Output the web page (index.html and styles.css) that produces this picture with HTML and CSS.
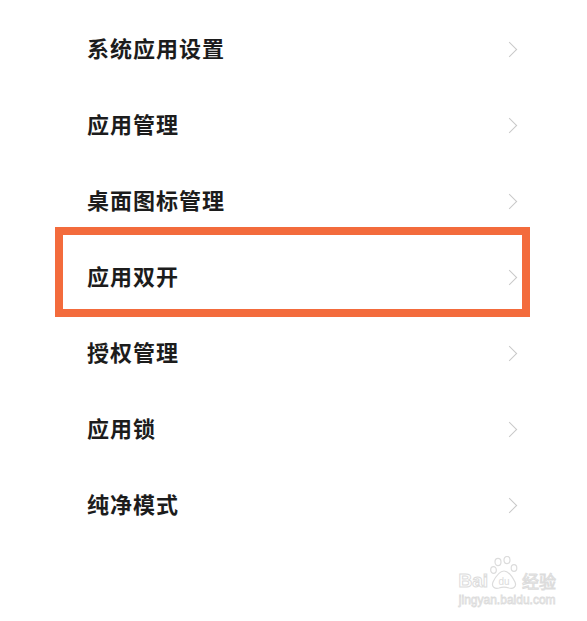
FILE: index.html
```html
<!DOCTYPE html>
<html lang="zh-CN">
<head>
    <meta charset="UTF-8">
    <meta name="viewport" content="width=device-width, initial-scale=1.0">
    <title>应用设置</title>
    <link rel="stylesheet" href="styles.css">
</head>
<body>
    <!-- Settings list -->
    <ul class="settings">
        <li class="row"><span class="label">系统应用设置</span><span class="chevron"></span></li>
        <li class="row"><span class="label">应用管理</span><span class="chevron"></span></li>
        <li class="row"><span class="label">桌面图标管理</span><span class="chevron"></span></li>
        <li class="row marked">
            <span class="label">应用双开</span><span class="chevron"></span>
            <!-- Annotation frame drawn over the row -->
            <div class="highlight"></div>
        </li>
        <li class="row"><span class="label">授权管理</span><span class="chevron"></span></li>
        <li class="row"><span class="label">应用锁</span><span class="chevron"></span></li>
        <li class="row"><span class="label">纯净模式</span><span class="chevron"></span></li>
    </ul>

    <!-- Watermark in the bottom-right corner -->
    <div class="watermark">
        <div class="wm-top">
            <span class="wm-bai">Bai</span>
            <svg class="wm-paw" width="30" height="34" viewBox="0 0 30 34">
                <ellipse cx="8" cy="6" rx="3" ry="3.6" fill="none" stroke="#dcdcdc" stroke-width="1.2"/>
                <ellipse cx="17" cy="4" rx="3" ry="3.6" fill="none" stroke="#dcdcdc" stroke-width="1.2"/>
                <ellipse cx="3.5" cy="14" rx="2.8" ry="3.4" fill="none" stroke="#dcdcdc" stroke-width="1.2"/>
                <ellipse cx="24" cy="12" rx="2.8" ry="3.4" fill="none" stroke="#dcdcdc" stroke-width="1.2"/>
                <path d="M14 15 C9 15 5 22 3 26 C1 31 5 33 9 32 C12 31 16 31 19 32 C23 33 27 31 25 26 C23 22 19 15 14 15 Z" fill="none" stroke="#dcdcdc" stroke-width="1.2"/>
                <text x="14" y="29" text-anchor="middle" font-family="Liberation Sans, sans-serif" font-size="10" fill="#dcdcdc">du</text>
            </svg>
            <span class="wm-cn">经验</span>
        </div>
        <div class="wm-url">jingyan.baidu.com</div>
    </div>
</body>
</html>
```

FILE: styles.css
```css
/* General styling */
body {
    margin: 0;
    background-color: #ffffff;
    font-family: "Noto Sans CJK SC", "Noto Sans", sans-serif;
    width: 587px;
    height: 621px;
    position: relative;
    overflow: hidden;
}

.settings {
    list-style: none;
    margin: 0;
    padding: 9px 0 0 0;
}

.row {
    position: relative;
    height: 76px;
    display: flex;
    align-items: center;
    justify-content: space-between;
    padding: 0 70px 0 87px;
}

.label {
    font-size: 22px;
    font-weight: bold;
    letter-spacing: 1px;
    color: #1c1c1c;
}

/* Small grey arrow on the right */
.chevron {
    width: 10px;
    height: 10px;
    border-top: 1.6px solid #c8c8c8;
    border-right: 1.6px solid #c8c8c8;
    transform: rotate(45deg);
    margin: 4px 2px 0 0;
}

.highlight {
    position: absolute;
    top: -10px;
    bottom: -4px;
    left: 55px;
    right: 57px;
    border: 8px solid #f36b3c;
    box-sizing: border-box;
}

/* Watermark */
.watermark {
    position: absolute;
    right: 31px;
    bottom: 14px;
    display: flex;
    flex-direction: column;
    align-items: center;
    color: #ffffff;
}

.wm-top {
    display: flex;
    align-items: flex-end;
    gap: 2px;
}

.wm-bai {
    font-family: "Liberation Sans", sans-serif;
    font-size: 19px;
    font-weight: bold;
    line-height: 18px;
    -webkit-text-stroke: 1px #dcdcdc;
}

.wm-paw {
    display: block;
}

.wm-cn {
    font-size: 17px;
    line-height: 18px;
    -webkit-text-stroke: 1px #dcdcdc;
}

.wm-url {
    font-family: "Liberation Sans", sans-serif;
    font-size: 12px;
    margin-top: 3px;
    -webkit-text-stroke: 0.8px #dcdcdc;
}
```
